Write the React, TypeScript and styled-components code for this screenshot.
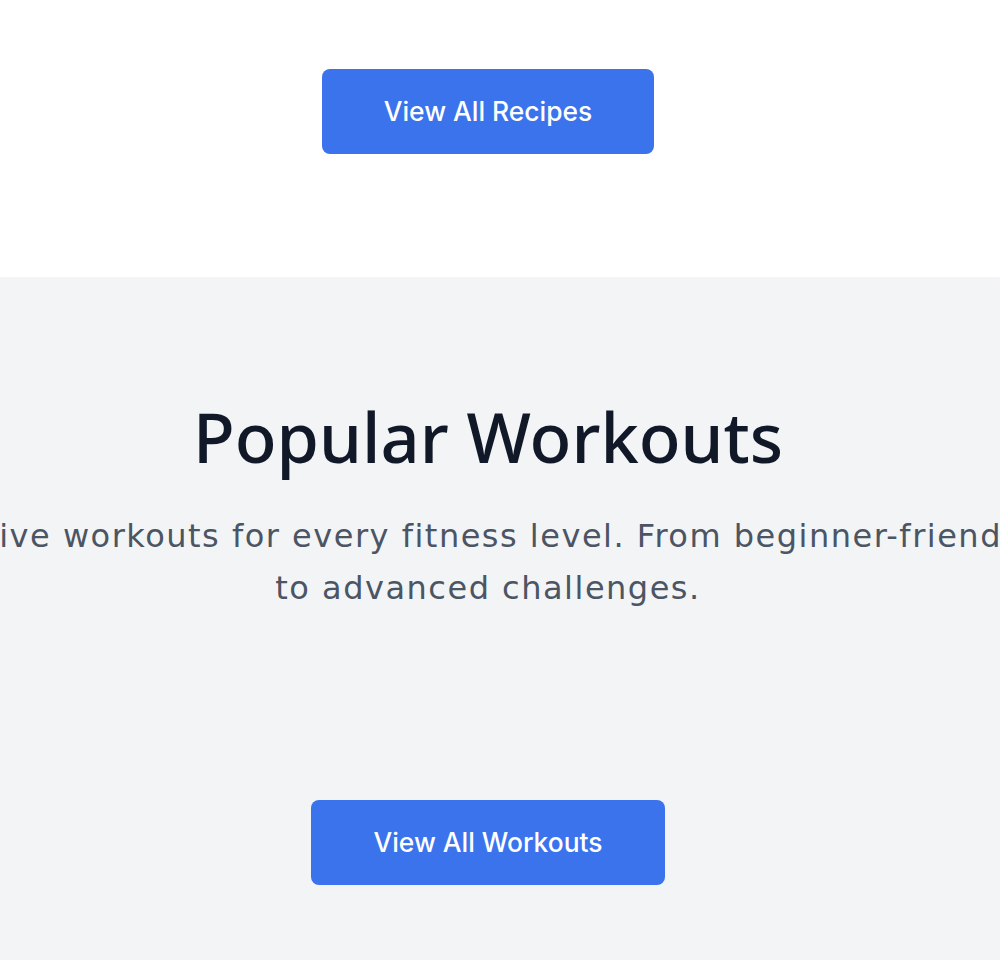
import React from "react";
import styled, { createGlobalStyle } from "styled-components";

const Global = createGlobalStyle`
  html, body { margin: 0; padding: 0; background: #ffffff; }
  body { overflow-x: hidden; font-family: "Inter", "Liberation Sans", sans-serif; }
`;

const Section = styled.section<{ $bg: string; $pt: number; $pb: number }>`
  background: ${(p) => p.$bg};
  padding: ${(p) => p.$pt}px 0 ${(p) => p.$pb}px;
  display: flex;
  flex-direction: column;
  align-items: flex-start;
  width: 1000px;
`;

const Inner = styled.div`
  width: 976px;
  display: flex;
  flex-direction: column;
  align-items: center;
`;

const Title = styled.h2`
  margin: 0;
  font-family: "Noto Sans", "Lato", sans-serif;
  font-weight: 500;
  font-size: 68.5px;
  line-height: 84px;
  color: #111827;
`;

const Lead = styled.p`
  margin: 31px 0 0;
  width: 1100px;
  flex-shrink: 0;
  text-align: center;
  font-family: "DejaVu Sans", "Liberation Sans", sans-serif;
  font-size: 32px;
  letter-spacing: 1.5px;
  line-height: 52px;
  color: #4b5563;
`;

const Button = styled.button<{ $mt?: number }>`
  margin-top: ${(p) => p.$mt ?? 0}px;
  border: 0;
  border-radius: 8px;
  background: #3b73ed;
  color: #ffffff;
  font-family: "Inter", "Liberation Sans", sans-serif;
  font-size: 26.4px;
  font-weight: 500;
  line-height: 37px;
  padding: 24px 62px;
  cursor: pointer;
`;

export default function App() {
  return (
    <>
      <Global />
      <Section $bg="#ffffff" $pt={69} $pb={123}>
        <Inner>
          <Button>View All Recipes</Button>
        </Inner>
      </Section>
      <Section $bg="#f3f4f6" $pt={118} $pb={75}>
        <Inner>
          <Title>Popular Workouts</Title>
          <Lead>
            Active workouts for every fitness level. From beginner-friendly to advanced challenges.
          </Lead>
          <Button $mt={186}>View All Workouts</Button>
        </Inner>
      </Section>
    </>
  );
}
